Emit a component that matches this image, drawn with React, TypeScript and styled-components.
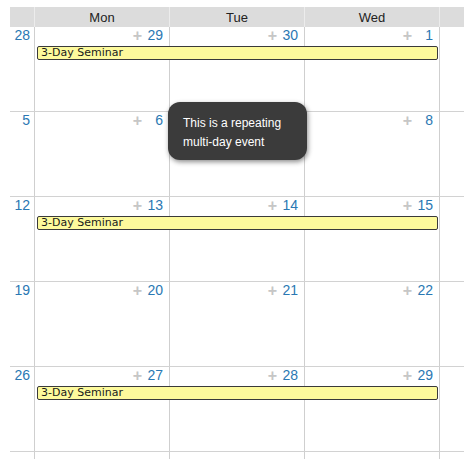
import React from "react";
import styled, { createGlobalStyle } from "styled-components";

const Global = createGlobalStyle`
  html, body { margin: 0; padding: 0; background: #fff; }
  body { font-family: "Liberation Sans", Arial, sans-serif; }
`;

const COLS = "25px 135px 135px 135px 24px";

const Page = styled.div`
  padding: 7px 10px 0 10px;
  width: 454px;
  position: relative;
`;

const Header = styled.div`
  display: grid;
  grid-template-columns: ${COLS};
  height: 20px;
  background: #dcdcdc;
`;

const HeadCell = styled.div<{ $last?: boolean }>`
  display: flex;
  align-items: center;
  justify-content: center;
  font-size: 13px;
  color: #222;
  border-right: ${(p) => (p.$last ? "none" : "1px solid #ececec")};
  box-sizing: border-box;
`;

const Week = styled.div<{ $open?: boolean }>`
  display: grid;
  grid-template-columns: ${COLS};
  grid-template-rows: ${(p) => (p.$open ? "1fr" : "19px 14px 1fr")};
  height: ${(p) => (p.$open ? "7px" : "84px")};
  border-bottom: ${(p) => (p.$open ? "none" : "1px solid #d2d2d2")};
`;

const Cell = styled.div<{ $col: number; $last?: boolean }>`
  grid-column: ${(p) => p.$col};
  grid-row: 1 / -1;
  border-right: ${(p) => (p.$last ? "none" : "1px solid #cfcfcf")};
  box-sizing: border-box;
  display: flex;
  justify-content: flex-end;
  align-items: flex-start;
  padding-right: ${(p) => (p.$col === 1 ? "4px" : "6px")};
`;

const DayNum = styled.span<{ $boxed?: boolean }>`
  font-size: 14px;
  line-height: 17px;
  color: #2a78b3;
  min-width: ${(p) => (p.$boxed ? "16px" : "0")};
  text-align: right;
`;

const Plus = styled.span`
  font-size: 16px;
  line-height: 17px;
  font-weight: bold;
  color: #c6c6c6;
  margin-right: 5px;
`;

const EventBar = styled.div`
  grid-column: 2 / 5;
  grid-row: 2;
  margin: 0 2px;
  background: #fdfa9c;
  border: 1px solid #3a3a3a;
  border-radius: 2px;
  box-sizing: border-box;
  font-family: "DejaVu Sans", Verdana, sans-serif;
  font-size: 11px;
  line-height: 12px;
  color: #1a1a1a;
  padding-left: 3px;
  white-space: nowrap;
  overflow: hidden;
  z-index: 1;
`;

const Tooltip = styled.div`
  position: absolute;
  left: 168px;
  top: 102px;
  width: 139px;
  height: 58px;
  box-sizing: border-box;
  padding: 12px 10px 8px 15px;
  background: #3b3b3b;
  border-radius: 12px;
  box-shadow: 1px 2px 5px rgba(0, 0, 0, 0.45);
  color: #fff;
  font-size: 12px;
  line-height: 19px;
  z-index: 5;
`;

type WeekData = { first: number; days: (number | null)[]; event: boolean };

// null marks the day whose number lies under the tooltip
const weeks: WeekData[] = [
  { first: 28, days: [29, 30, 1], event: true },
  { first: 5, days: [6, null, 8], event: false },
  { first: 12, days: [13, 14, 15], event: true },
  { first: 19, days: [20, 21, 22], event: false },
  { first: 26, days: [27, 28, 29], event: true },
];

export default function App() {
  return (
    <>
      <Global />
      <Page>
        <Header>
          <HeadCell />
          <HeadCell>Mon</HeadCell>
          <HeadCell>Tue</HeadCell>
          <HeadCell>Wed</HeadCell>
          <HeadCell $last />
        </Header>
        {weeks.map((w) => (
          <Week key={w.first}>
            <Cell $col={1}>
              <DayNum>{w.first}</DayNum>
            </Cell>
            {w.days.map((d, i) => (
              <Cell key={i} $col={i + 2}>
                {d !== null && (
                  <>
                    <Plus>+</Plus>
                    <DayNum $boxed>{d}</DayNum>
                  </>
                )}
              </Cell>
            ))}
            <Cell $col={5} $last />
            {w.event && <EventBar>3-Day Seminar</EventBar>}
          </Week>
        ))}
        <Week $open>
          <Cell $col={1} />
          <Cell $col={2} />
          <Cell $col={3} />
          <Cell $col={4} />
          <Cell $col={5} $last />
        </Week>
        <Tooltip>
          This is a repeating
          <br />
          multi-day event
        </Tooltip>
      </Page>
    </>
  );
}
